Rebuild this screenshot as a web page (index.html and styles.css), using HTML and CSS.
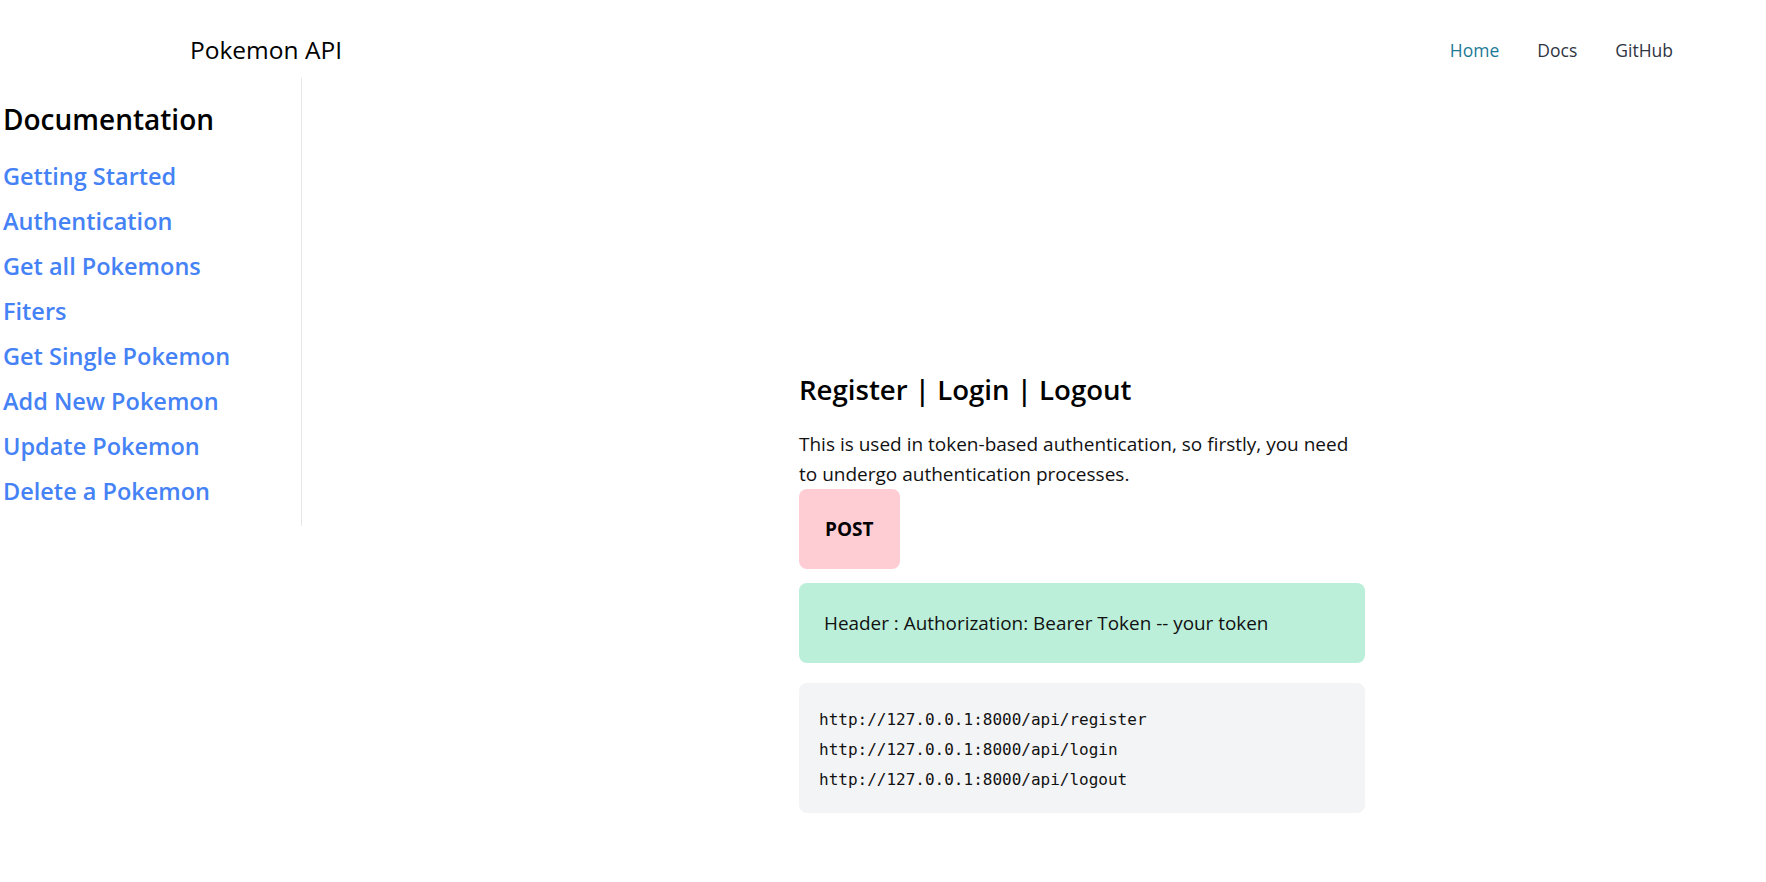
FILE: index.html
```html
<!DOCTYPE html>
<html lang="en">
<head>
<meta charset="utf-8">
<title>Pokemon API</title>
<link rel="stylesheet" href="styles.css">
</head>
<body>
<header class="topbar">
  <a class="brand" href="#">Pokemon API</a>
  <nav class="nav">
    <a class="nav-link active" href="#">Home</a>
    <a class="nav-link" href="#">Docs</a>
    <a class="nav-link" href="#">GitHub</a>
  </nav>
</header>
<div class="layout">
  <aside class="sidebar">
    <h2 class="side-title">Documentation</h2>
    <ul class="side-list">
      <li><a href="#">Getting Started</a></li>
      <li><a href="#">Authentication</a></li>
      <li><a href="#">Get all Pokemons</a></li>
      <li><a href="#">Fiters</a></li>
      <li><a href="#">Get Single Pokemon</a></li>
      <li><a href="#">Add New Pokemon</a></li>
      <li><a href="#">Update Pokemon</a></li>
      <li><a href="#">Delete a Pokemon</a></li>
    </ul>
  </aside>
  <main class="content">
    <section class="doc">
      <h1 class="doc-title">Register | Login | Logout</h1>
      <p class="doc-text">This is used in token-based authentication, so firstly, you need to undergo authentication processes.</p>
      <div class="method">POST</div>
      <div class="header-box">Header : Authorization: Bearer Token -- your token</div>
      <div class="code-box">
        <code>http://127.0.0.1:8000/api/register</code>
        <code>http://127.0.0.1:8000/api/login</code>
        <code>http://127.0.0.1:8000/api/logout</code>
      </div>
    </section>
  </main>
</div>
</body>
</html>
```
FILE: styles.css
```css
* { box-sizing: border-box; }
html, body { margin: 0; padding: 0; background: #fff; }
body {
  font-family: "Open Sans", "Noto Sans", sans-serif;
  color: #111;
}
a { text-decoration: none; }

.topbar {
  height: 78px;
  display: flex;
  align-items: center;
  justify-content: space-between;
  padding: 22px 93px 0 190px;
}
.brand {
  font-size: 24.5px;
  color: #000;
  line-height: 34px;
}
.nav {
  display: flex;
  gap: 38px;
  align-items: center;
}
.nav-link {
  font-size: 17.5px;
  font-weight: 500;
  color: #2f3542;
  line-height: 26px;
}
.nav-link.active { color: #1d7a97; }

.layout {
  display: flex;
  align-items: flex-start;
}
.sidebar {
  width: 302px;
  flex: none;
  border-right: 1px solid #e5e7eb;
  padding: 23px 0 19px 3px;
}
.side-title {
  margin: 0 0 23px;
  font-size: 28px;
  line-height: 36px;
  font-weight: 600;
  color: #000;
}
.side-list {
  list-style: none;
  margin: 0;
  padding: 0;
  display: flex;
  flex-direction: column;
  gap: 13px;
}
.side-list a {
  display: block;
  font-size: 23.5px;
  line-height: 32px;
  font-weight: 600;
  color: #4582f5;
}

.content {
  flex: 1;
  padding: 293px 0 60px 497px;
}
.doc { width: 566px; }
.doc-title {
  margin: 0 0 22px;
  font-size: 27.6px;
  line-height: 36px;
  font-weight: 600;
  color: #000;
}
.doc-text {
  margin: 0;
  font-size: 19px;
  line-height: 30px;
  color: #111;
}
.method {
  display: inline-block;
  margin-top: 0;
  padding: 24px 26px;
  background: #fecdd4;
  border-radius: 8px;
  font-size: 19px;
  font-weight: 700;
  line-height: 32px;
  color: #000;
}
.header-box {
  margin-top: 14px;
  padding: 24px 25px;
  background: #bbefda;
  border-radius: 8px;
  font-size: 18.9px;
  line-height: 32px;
  color: #111;
}
.code-box {
  margin-top: 20px;
  padding: 22px 20px 18px;
  background: #f3f4f6;
  border-radius: 8px;
  display: flex;
  flex-direction: column;
}
.code-box code {
  font-family: "DejaVu Sans Mono", "Liberation Mono", monospace;
  font-size: 16px;
  line-height: 30px;
  color: #111;
}
```
